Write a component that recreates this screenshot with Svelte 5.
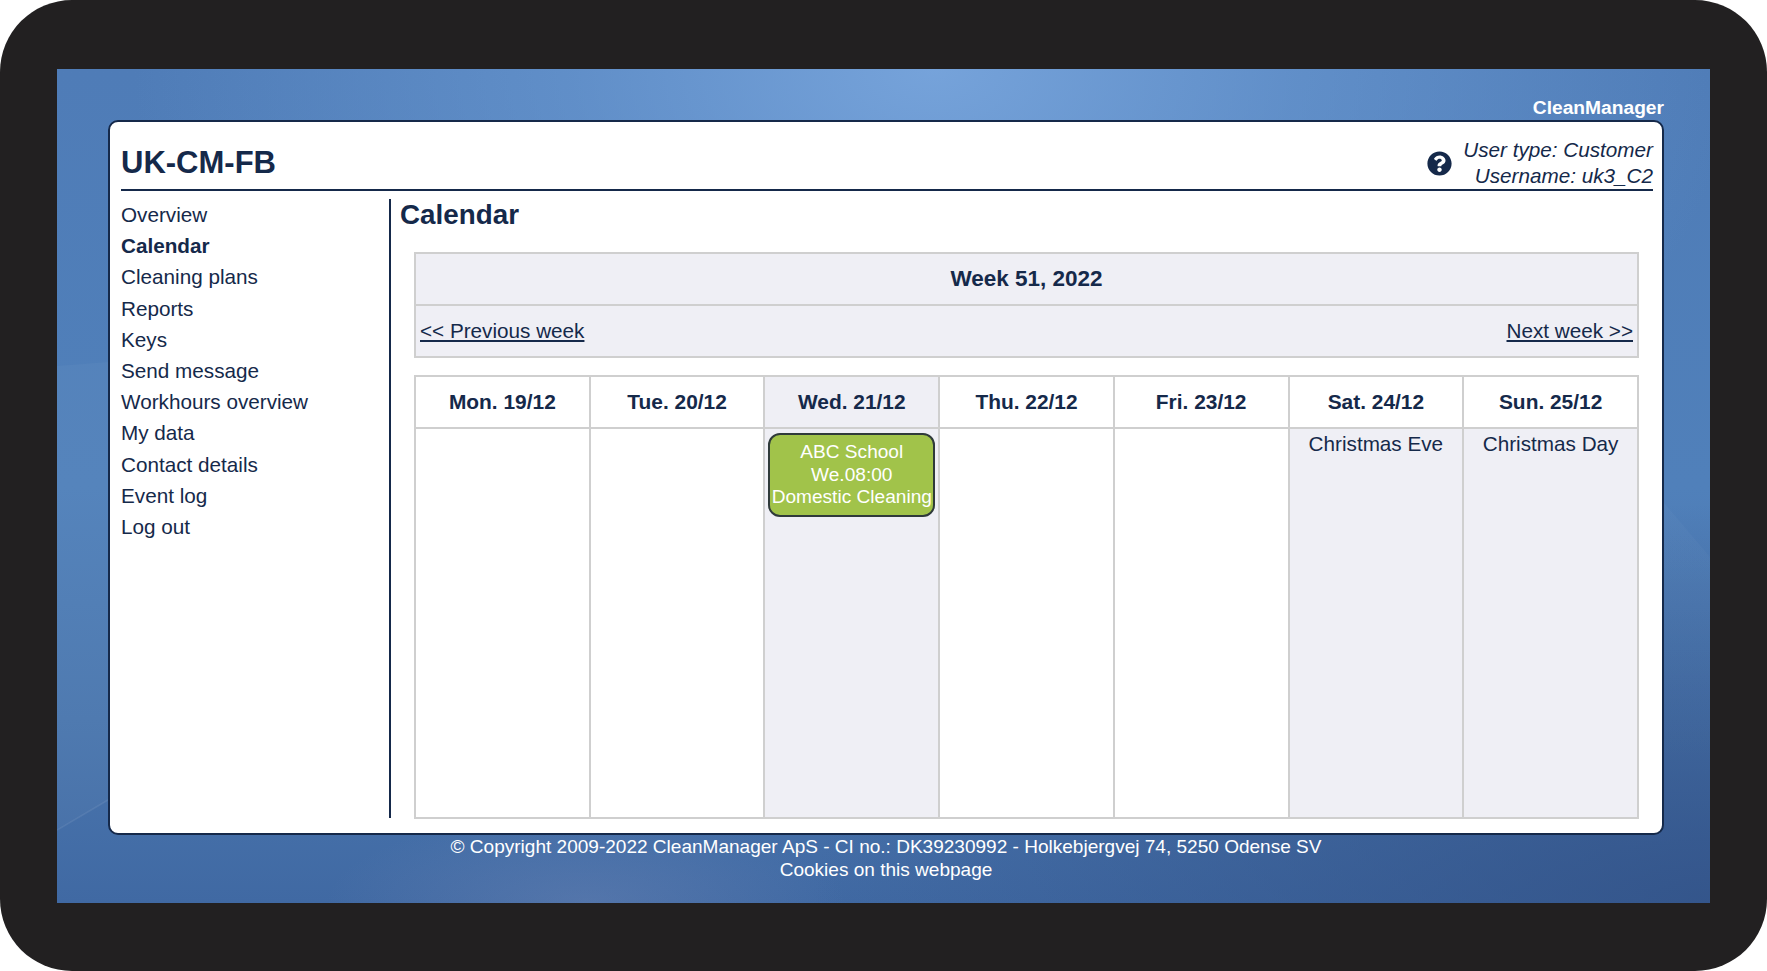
<script>
  const nav = ['Overview', 'Calendar', 'Cleaning plans', 'Reports', 'Keys', 'Send message', 'Workhours overview', 'My data', 'Contact details', 'Event log', 'Log out'];
  const days = [
    { label: 'Mon. 19/12' },
    { label: 'Tue. 20/12' },
    { label: 'Wed. 21/12', shade: true, event: ['ABC School', 'We.08:00', 'Domestic Cleaning'] },
    { label: 'Thu. 22/12' },
    { label: 'Fri. 23/12' },
    { label: 'Sat. 24/12', shade: true, note: 'Christmas Eve' },
    { label: 'Sun. 25/12', shade: true, note: 'Christmas Day' }
  ];
</script>

<div class="frame">
  <div class="desk">
    <svg class="streaks" viewBox="0 0 1653 834" aria-hidden="true">
      <defs>
        <linearGradient id="fade" x1="0" y1="0" x2="0" y2="1">
          <stop offset="0" stop-color="#fff" stop-opacity="0.025" />
          <stop offset="1" stop-color="#fff" stop-opacity="0" />
        </linearGradient>
      </defs>
      <path d="M0 297 L51 293 L51 731 L0 761 Z" fill="#fff" opacity="0.03" />
      <path d="M0 761 L51 731" stroke="#fff" stroke-width="1.5" opacity="0.08" fill="none" />
      <path d="M1607 434 L1653 488 L1653 720 L1607 720 Z" fill="url(#fade)" />
    </svg>
    <div class="brand">CleanManager</div>
    <div class="card">
      <header class="top">
        <h1>UK-CM-FB</h1>
        <div class="user">
          <svg class="help" viewBox="0 0 512 512" aria-hidden="true">
            <path fill="#15294a" d="M504 256c0 136.997-111.043 248-248 248S8 392.997 8 256C8 119.083 119.043 8 256 8s248 111.083 248 248zM262.655 90c-54.497 0-89.255 22.957-116.549 63.758-3.536 5.286-2.353 12.415 2.715 16.258l34.699 26.31c5.205 3.947 12.621 3.008 16.665-2.122 17.864-22.658 30.113-35.797 57.303-35.797 20.429 0 45.698 13.148 45.698 32.958 0 14.976-12.363 22.667-32.534 33.976C247.128 238.528 216 254.941 216 296v4c0 6.627 5.373 12 12 12h56c6.627 0 12-5.373 12-12v-1.333c0-28.462 83.186-29.647 83.186-106.667 0-58.002-60.165-102-116.531-102zM256 338c-25.365 0-46 20.635-46 46 0 25.364 20.635 46 46 46s46-20.636 46-46c0-25.365-20.635-46-46-46z" />
          </svg>
          <div class="who">
            <div>User type: Customer</div>
            <div>Username: uk3_C2</div>
          </div>
        </div>
      </header>
      <div class="body">
        <nav>
          {#each nav as item}
            <a href="#top" class:current={item === 'Calendar'}>{item}</a>
          {/each}
        </nav>
        <main>
          <h2>Calendar</h2>
          <div class="tables">
            <table class="week">
              <tbody>
                <tr><th>Week 51, 2022</th></tr>
                <tr>
                  <td>
                    <div class="pager">
                      <a href="#top">&lt;&lt; Previous week</a>
                      <a href="#top">Next week &gt;&gt;</a>
                    </div>
                  </td>
                </tr>
              </tbody>
            </table>
            <table class="days">
              <thead>
                <tr>
                  {#each days as d}
                    <th class:shade={d.label.startsWith('Wed')}>{d.label}</th>
                  {/each}
                </tr>
              </thead>
              <tbody>
                <tr>
                  {#each days as d}
                    <td class:shade={d.shade}>
                      {#if d.event}
                        <div class="event">
                          {#each d.event as line}<div>{line}</div>{/each}
                        </div>
                      {/if}
                      {#if d.note}<div class="note">{d.note}</div>{/if}
                    </td>
                  {/each}
                </tr>
              </tbody>
            </table>
          </div>
        </main>
      </div>
    </div>
    <footer>
      <div>© Copyright 2009-2022 CleanManager ApS - CI no.: DK39230992 - Holkebjergvej 74, 5250 Odense SV</div>
      <div>Cookies on this webpage</div>
    </footer>
  </div>
</div>

<style>
  :global(body) {
    margin: 0;
    background: #fff;
  }
  .frame {
    width: 1767px;
    height: 971px;
    box-sizing: border-box;
    padding: 69px 57px 68px 57px;
    background: #222021;
    border-radius: 72px;
    font-family: "Liberation Sans", Arial, sans-serif;
    font-size: 20.7px;
    color: #15294a;
    overflow: hidden;
  }
  .desk {
    position: relative;
    height: 834px;
    box-sizing: border-box;
    padding: 0 46px 0 51px;
    background:
      radial-gradient(ellipse 800px 500px at 53% 0%, rgba(122, 167, 222, 0.9) 0%, rgba(108, 155, 212, 0.6) 45%, rgba(80, 125, 185, 0) 100%),
      radial-gradient(ellipse 260px 90px at 32% 100%, rgba(120, 140, 185, 0.35) 0%, rgba(120, 140, 185, 0) 100%),
      radial-gradient(ellipse 900px 400px at 100% 100%, rgba(50, 82, 135, 0.85) 0%, rgba(50, 82, 135, 0) 100%),
      linear-gradient(180deg, #4f7cb7 0%, #5080ba 50%, #4a76ae 78%, #4069a3 100%);
    overflow: hidden;
  }
  .streaks {
    position: absolute;
    inset: 0;
    width: 100%;
    height: 100%;
    pointer-events: none;
  }
  .brand {
    position: relative;
    height: 51px;
    box-sizing: border-box;
    padding-top: 28px;
    text-align: right;
    font-weight: 700;
    font-size: 19.2px;
    line-height: 22px;
    color: #fff;
  }
  .card {
    position: relative;
    height: 715px;
    box-sizing: border-box;
    background: #fff;
    border: 2px solid #15294a;
    border-radius: 10px;
    padding: 0 9px 0 11px;
  }
  .top {
    display: flex;
    justify-content: space-between;
    align-items: flex-end;
    height: 69px;
    box-sizing: border-box;
    border-bottom: 2px solid #15294a;
  }
  h1 {
    margin: 0 0 6px;
    font-size: 31px;
    line-height: 40px;
    font-weight: 700;
  }
  .user {
    display: flex;
    align-items: center;
    gap: 11px;
  }
  .help {
    width: 25px;
    height: 25px;
  }
  .who {
    font-style: italic;
    text-align: right;
    line-height: 26px;
  }
  .body {
    display: flex;
    height: 627px;
    padding-top: 8px;
    box-sizing: border-box;
  }
  nav {
    width: 270px;
    flex: none;
    box-sizing: border-box;
    border-right: 2px solid #15294a;
  }
  nav a {
    display: block;
    height: 31.2px;
    line-height: 31.2px;
    color: #15294a;
    text-decoration: none;
  }
  nav a.current {
    font-weight: 700;
  }
  main {
    flex: 1;
    min-width: 0;
    padding-left: 9px;
  }
  h2 {
    margin: 0;
    font-size: 27.8px;
    line-height: 32px;
    font-weight: 700;
  }
  .tables {
    margin: 21px 14px 0 14px;
    display: flex;
    flex-direction: column;
    gap: 17px;
  }
  table {
    width: 1225px;
    border-collapse: collapse;
    table-layout: fixed;
  }
  th, td {
    border: 2px solid #cfcfcf;
    padding: 0;
  }
  .week {
    background: #efeff5;
  }
  .week th {
    height: 50px;
    font-size: 22.5px;
    text-align: center;
  }
  .week td {
    height: 50px;
  }
  .pager {
    display: flex;
    justify-content: space-between;
    padding: 0 4px;
  }
  .pager a {
    color: #15294a;
  }
  .days th {
    height: 50px;
    font-size: 20.9px;
    font-weight: 700;
    text-align: center;
  }
  .days td {
    height: 388px;
    vertical-align: top;
    text-align: center;
  }
  .shade {
    background: #efeff5;
  }
  .event {
    margin: 4px 3px 0 3px;
    height: 84px;
    box-sizing: border-box;
    background: #a1c34a;
    border: 2px solid #2f3a3a;
    border-radius: 12px;
    color: #fff;
    font-size: 19.1px;
    line-height: 22.6px;
    padding-top: 6px;
    white-space: nowrap;
  }
  .note {
    padding-top: 3px;
    line-height: 24px;
  }
  footer {
    position: relative;
    text-align: center;
    color: #fff;
    font-size: 19.05px;
    padding-top: 1px;
    line-height: 22.6px;
  }
</style>
